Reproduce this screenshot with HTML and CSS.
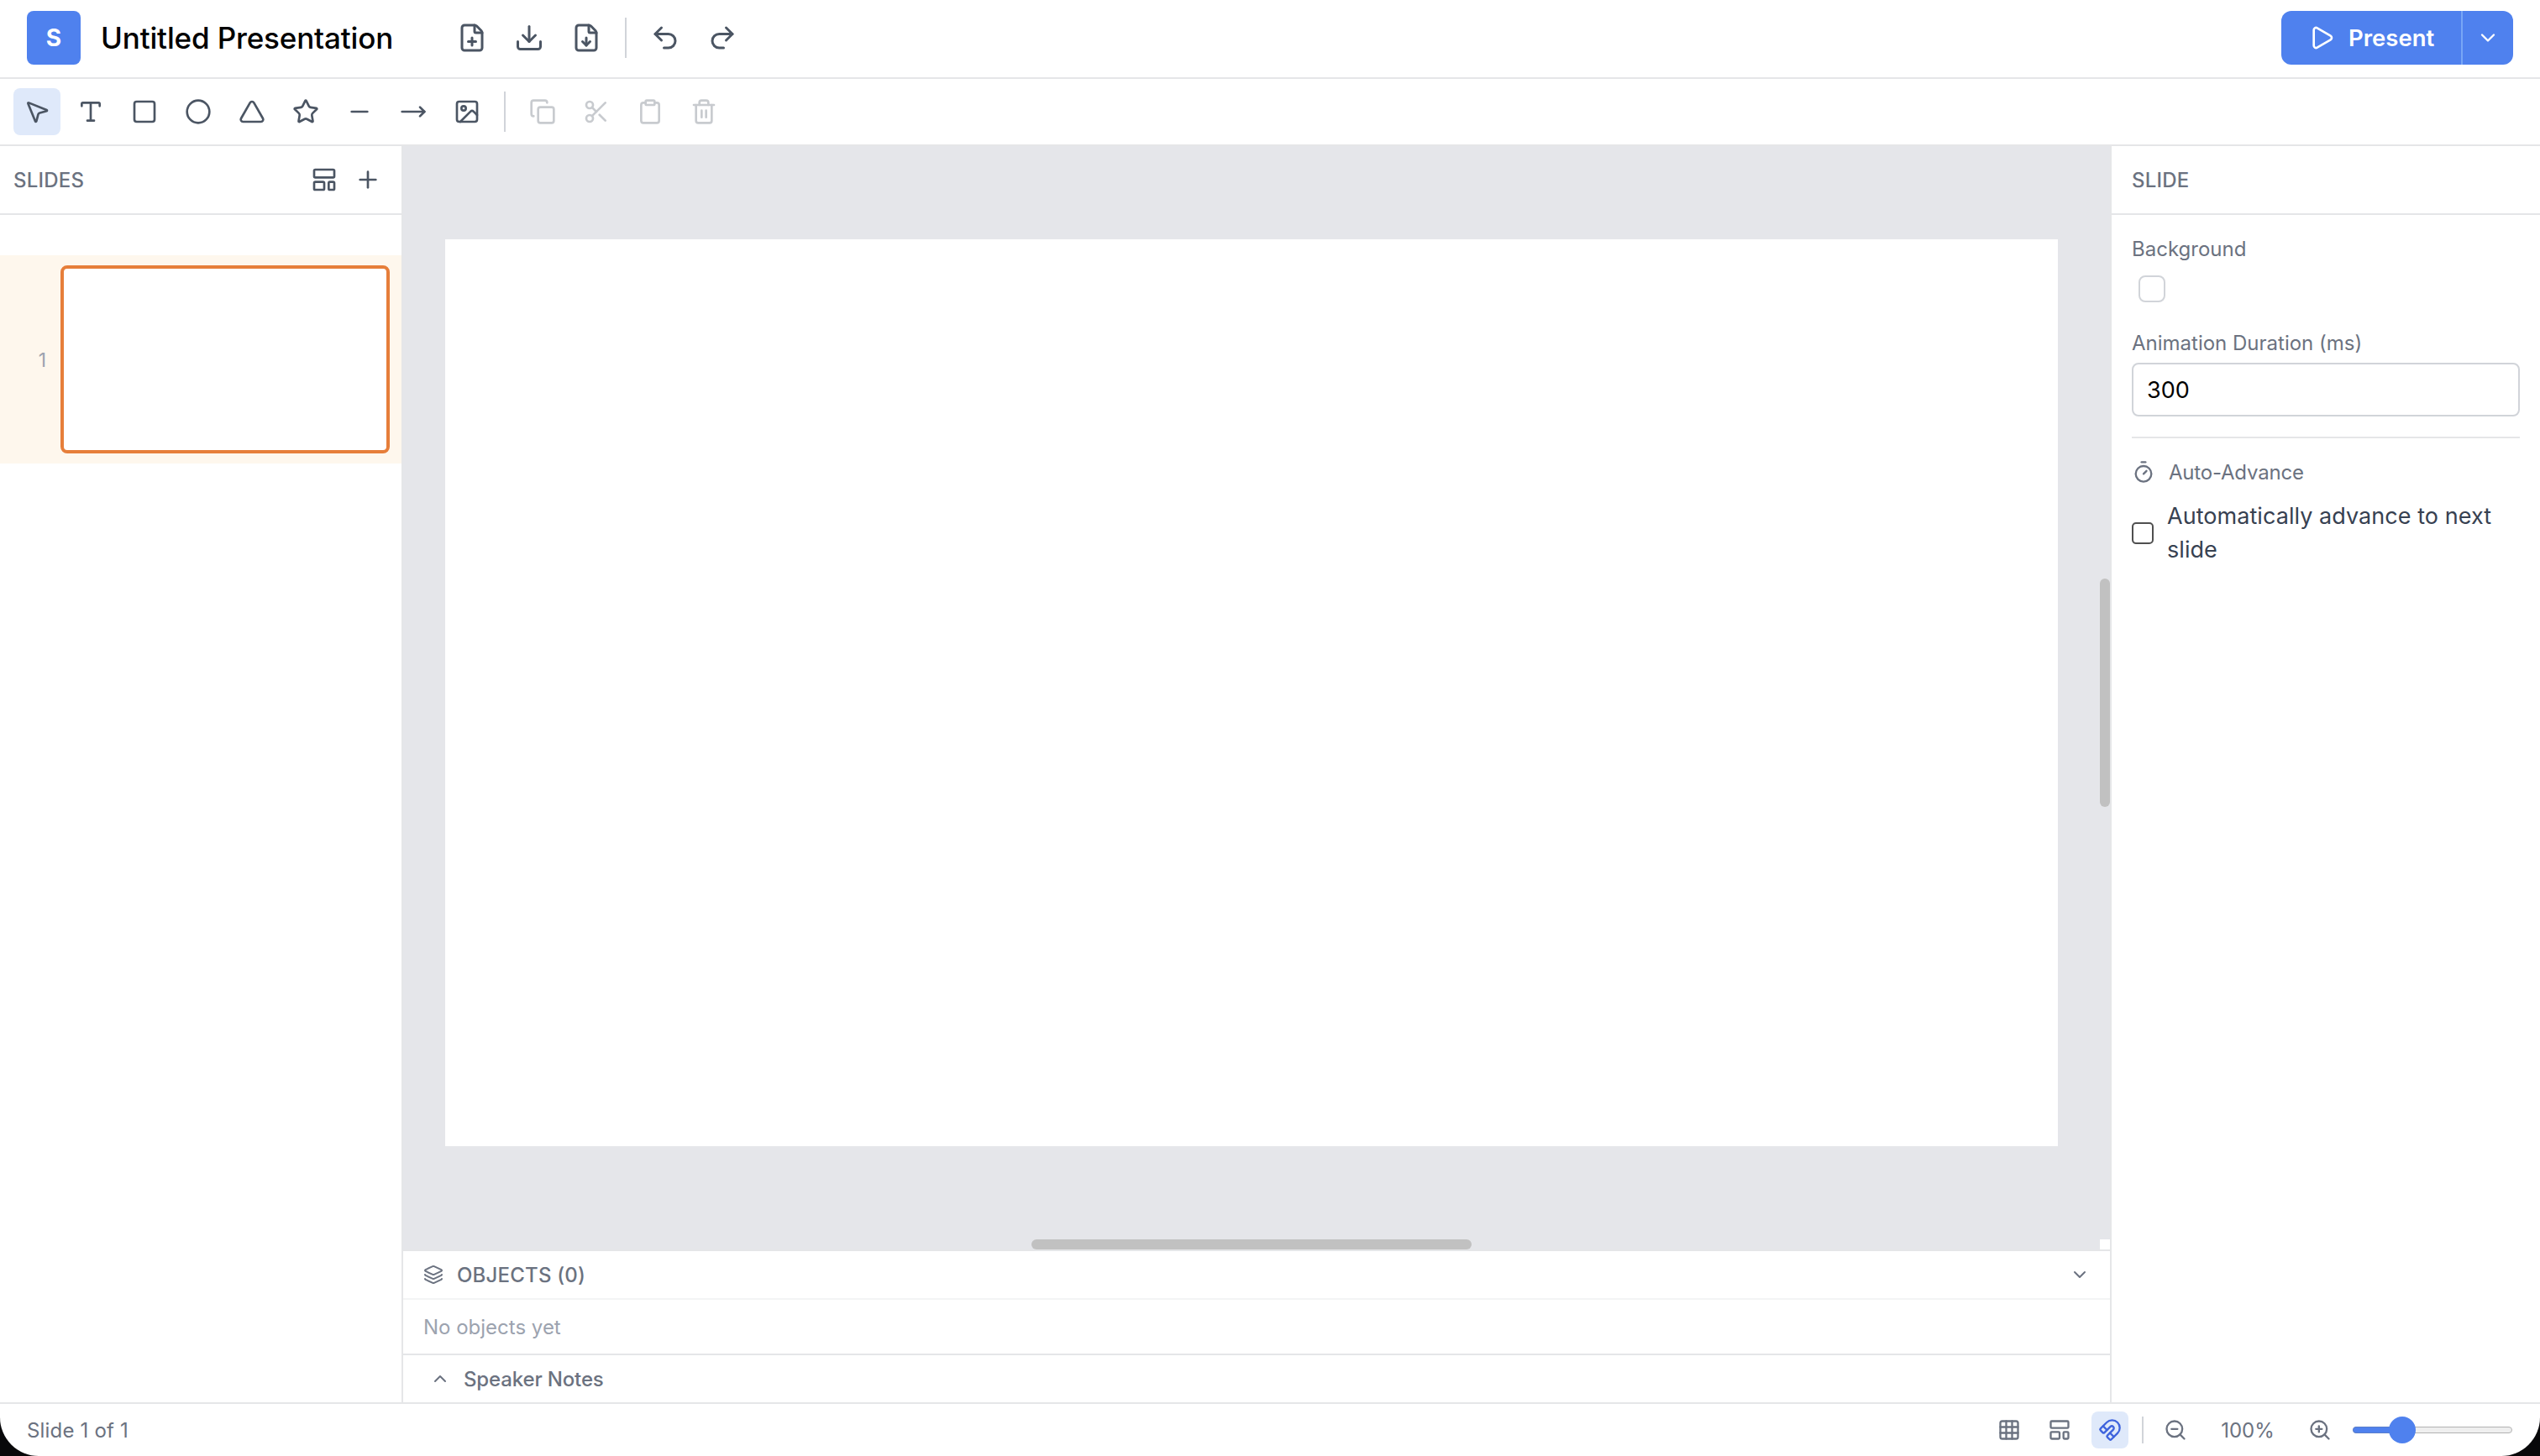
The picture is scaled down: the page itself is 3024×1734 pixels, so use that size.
FILE: index.html
```html
<!DOCTYPE html>
<html lang="en">
<head>
    <meta charset="UTF-8">
    <meta name="viewport" content="width=device-width, initial-scale=1.0">
    <title>Untitled Presentation</title>
    <link rel="stylesheet" href="styles.css">
</head>
<body>
    <div class="app">
        <header class="header">
            <div class="logo">S</div>
            <h1 class="title">Untitled Presentation</h1>
            <div class="header-actions">
                <button class="header-btn" aria-label="New">
                    <svg class="icon icon-lg" viewBox="0 0 24 24"><path d="M6 22a2 2 0 0 1-2-2V4a2 2 0 0 1 2-2h8a2.4 2.4 0 0 1 1.704.706l3.588 3.588A2.4 2.4 0 0 1 20 8v12a2 2 0 0 1-2 2z"/><path d="M14 2v5a1 1 0 0 0 1 1h5"/><path d="M9 15h6"/><path d="M12 18v-6"/></svg>
                </button>
                <button class="header-btn" aria-label="Download">
                    <svg class="icon icon-lg" viewBox="0 0 24 24"><path d="M12 15V3"/><path d="M21 15v4a2 2 0 0 1-2 2H5a2 2 0 0 1-2-2v-4"/><path d="m7 10 5 5 5-5"/></svg>
                </button>
                <button class="header-btn" aria-label="Export">
                    <svg class="icon icon-lg" viewBox="0 0 24 24"><path d="M6 22a2 2 0 0 1-2-2V4a2 2 0 0 1 2-2h8a2.4 2.4 0 0 1 1.704.706l3.588 3.588A2.4 2.4 0 0 1 20 8v12a2 2 0 0 1-2 2z"/><path d="M14 2v5a1 1 0 0 0 1 1h5"/><path d="M12 18v-6"/><path d="m9 15 3 3 3-3"/></svg>
                </button>
                <span class="divider"></span>
                <button class="header-btn" aria-label="Undo">
                    <svg class="icon icon-lg" viewBox="0 0 24 24"><path d="M9 14 4 9l5-5"/><path d="M4 9h10.5a5.5 5.5 0 0 1 5.5 5.5a5.5 5.5 0 0 1-5.5 5.5H11"/></svg>
                </button>
                <button class="header-btn" aria-label="Redo">
                    <svg class="icon icon-lg" viewBox="0 0 24 24"><path d="m15 14 5-5-5-5"/><path d="M20 9H9.5A5.5 5.5 0 0 0 4 14.5A5.5 5.5 0 0 0 9.5 20H13"/></svg>
                </button>
            </div>
            <div class="present">
                <button class="present-btn">
                    <svg class="icon" viewBox="0 0 24 24"><path d="M5 5a2 2 0 0 1 3.008-1.728l11.997 6.998a2 2 0 0 1 .003 3.458l-12 7A2 2 0 0 1 5 19z"/></svg>
                    Present
                </button>
                <button class="present-menu" aria-label="Present options">
                    <svg class="icon icon-md" viewBox="0 0 24 24"><path d="m6 9 6 6 6-6"/></svg>
                </button>
            </div>
        </header>

        <div class="toolbar">
            <button class="tool active" aria-label="Select">
                <svg class="icon" viewBox="0 0 24 24"><path d="M4.037 4.688a.495.495 0 0 1 .651-.651l16 6.5a.5.5 0 0 1-.063.947l-6.124 1.58a2 2 0 0 0-1.438 1.435l-1.579 6.126a.5.5 0 0 1-.947.063z"/></svg>
            </button>
            <button class="tool" aria-label="Text">
                <svg class="icon" viewBox="0 0 24 24"><path d="M12 4v16"/><path d="M4 7V5a1 1 0 0 1 1-1h14a1 1 0 0 1 1 1v2"/><path d="M9 20h6"/></svg>
            </button>
            <button class="tool" aria-label="Rectangle">
                <svg class="icon" viewBox="0 0 24 24"><rect width="18" height="18" x="3" y="3" rx="2"/></svg>
            </button>
            <button class="tool" aria-label="Ellipse">
                <svg class="icon" viewBox="0 0 24 24"><circle cx="12" cy="12" r="10"/></svg>
            </button>
            <button class="tool" aria-label="Triangle">
                <svg class="icon" viewBox="0 0 24 24"><path d="M13.73 4a2 2 0 0 0-3.46 0l-8 14A2 2 0 0 0 4 21h16a2 2 0 0 0 1.73-3Z"/></svg>
            </button>
            <button class="tool" aria-label="Star">
                <svg class="icon" viewBox="0 0 24 24"><path d="M11.525 2.295a.53.53 0 0 1 .95 0l2.31 4.679a2.123 2.123 0 0 0 1.595 1.16l5.166.756a.53.53 0 0 1 .294.904l-3.736 3.638a2.123 2.123 0 0 0-.611 1.878l.882 5.14a.53.53 0 0 1-.771.56l-4.618-2.428a2.122 2.122 0 0 0-1.973 0L6.396 21.01a.53.53 0 0 1-.77-.56l.881-5.139a2.122 2.122 0 0 0-.611-1.879L2.16 9.795a.53.53 0 0 1 .294-.906l5.165-.755a2.122 2.122 0 0 0 1.597-1.16z"/></svg>
            </button>
            <button class="tool" aria-label="Line">
                <svg class="icon" viewBox="0 0 24 24"><path d="M5 12h14"/></svg>
            </button>
            <button class="tool" aria-label="Arrow">
                <svg class="icon" viewBox="0 0 24 24"><path d="M18 8L22 12L18 16"/><path d="M2 12H22"/></svg>
            </button>
            <button class="tool" aria-label="Image">
                <svg class="icon" viewBox="0 0 24 24"><rect width="18" height="18" x="3" y="3" rx="2"/><circle cx="9" cy="9" r="2"/><path d="m21 15-3.086-3.086a2 2 0 0 0-2.828 0L6 21"/></svg>
            </button>
            <span class="divider"></span>
            <button class="tool" aria-label="Copy" disabled>
                <svg class="icon" viewBox="0 0 24 24"><rect width="14" height="14" x="8" y="8" rx="2"/><path d="M4 16c-1.1 0-2-.9-2-2V4c0-1.1.9-2 2-2h10c1.1 0 2 .9 2 2"/></svg>
            </button>
            <button class="tool" aria-label="Cut" disabled>
                <svg class="icon" viewBox="0 0 24 24"><circle cx="6" cy="6" r="3"/><path d="M8.12 8.12 12 12"/><path d="M20 4 8.12 15.88"/><circle cx="6" cy="18" r="3"/><path d="M14.8 14.8 20 20"/></svg>
            </button>
            <button class="tool" aria-label="Paste" disabled>
                <svg class="icon" viewBox="0 0 24 24"><rect width="8" height="4" x="8" y="2" rx="1"/><path d="M16 4h2a2 2 0 0 1 2 2v14a2 2 0 0 1-2 2H6a2 2 0 0 1-2-2V6a2 2 0 0 1 2-2h2"/></svg>
            </button>
            <button class="tool" aria-label="Delete" disabled>
                <svg class="icon" viewBox="0 0 24 24"><path d="M10 11v6"/><path d="M14 11v6"/><path d="M19 6v14a2 2 0 0 1-2 2H7a2 2 0 0 1-2-2V6"/><path d="M3 6h18"/><path d="M8 6V4a2 2 0 0 1 2-2h4a2 2 0 0 1 2 2v2"/></svg>
            </button>
        </div>

        <div class="workspace">
            <aside class="slides-panel">
                <div class="panel-header">
                    <h2 class="panel-title">SLIDES</h2>
                    <div class="panel-actions">
                        <button class="panel-btn" aria-label="Layouts">
                            <svg class="icon" viewBox="0 0 24 24"><rect width="18" height="7" x="3" y="3" rx="1"/><rect width="9" height="7" x="3" y="14" rx="1"/><rect width="5" height="7" x="16" y="14" rx="1"/></svg>
                        </button>
                        <button class="panel-btn" aria-label="Add slide">
                            <svg class="icon" viewBox="0 0 24 24"><path d="M5 12h14"/><path d="M12 5v14"/></svg>
                        </button>
                    </div>
                </div>
                <div class="slide-item">
                    <span class="slide-number">1</span>
                    <div class="slide-thumb"></div>
                </div>
            </aside>

            <main class="editor">
                <div class="viewport">
                    <div class="stage"><div class="canvas"></div></div>
                    <div class="scroll-y"><div class="thumb"></div></div>
                    <div class="scroll-x"><div class="thumb"></div></div>
                    <div class="scroll-corner"></div>
                </div>
                <section class="objects">
                    <div class="objects-header">
                        <svg class="icon icon-sm" viewBox="0 0 24 24"><path d="M12.83 2.18a2 2 0 0 0-1.66 0L2.6 6.08a1 1 0 0 0 0 1.83l8.58 3.91a2 2 0 0 0 1.66 0l8.58-3.9a1 1 0 0 0 0-1.83z"/><path d="M2 12a1 1 0 0 0 .58.91l8.6 3.91a2 2 0 0 0 1.65 0l8.58-3.9A1 1 0 0 0 22 12"/><path d="M2 17a1 1 0 0 0 .58.91l8.6 3.91a2 2 0 0 0 1.65 0l8.58-3.9A1 1 0 0 0 22 17"/></svg>
                        <h2 class="panel-title">OBJECTS (0)</h2>
                        <svg class="icon icon-sm objects-toggle" viewBox="0 0 24 24"><path d="m6 9 6 6 6-6"/></svg>
                    </div>
                    <p class="objects-empty">No objects yet</p>
                </section>
                <div class="notes">
                    <svg class="icon icon-sm" viewBox="0 0 24 24"><path d="m18 15-6-6-6 6"/></svg>
                    <span class="notes-label">Speaker Notes</span>
                </div>
            </main>

            <aside class="props-panel">
                <div class="panel-header">
                    <h2 class="panel-title">SLIDE</h2>
                </div>
                <div class="props">
                    <label class="prop-label">Background</label>
                    <div class="swatch"></div>
                    <label class="prop-label" for="duration">Animation Duration (ms)</label>
                    <input class="prop-input" id="duration" type="text" value="300">
                    <div class="auto-advance">
                        <div class="auto-title">
                            <svg class="icon icon-md" viewBox="0 0 24 24"><path d="M10 2h4"/><path d="m12 14 3-3"/><circle cx="12" cy="14" r="8"/></svg>
                            <span>Auto-Advance</span>
                        </div>
                        <label class="check-row">
                            <input class="check" type="checkbox">
                            <span class="check-label">Automatically advance to next slide</span>
                        </label>
                    </div>
                </div>
            </aside>
        </div>

        <footer class="status">
            <span class="status-text">Slide 1 of 1</span>
            <div class="status-tools">
                <button class="status-btn" aria-label="Grid">
                    <svg class="icon icon-md" viewBox="0 0 24 24"><rect width="18" height="18" x="3" y="3" rx="2"/><path d="M3 9h18"/><path d="M3 15h18"/><path d="M9 3v18"/><path d="M15 3v18"/></svg>
                </button>
                <button class="status-btn" aria-label="Guides">
                    <svg class="icon icon-md" viewBox="0 0 24 24"><rect width="18" height="7" x="3" y="3" rx="1"/><rect width="9" height="7" x="3" y="14" rx="1"/><rect width="5" height="7" x="16" y="14" rx="1"/></svg>
                </button>
                <button class="status-btn active" aria-label="Snap">
                    <svg class="icon icon-md" viewBox="0 0 24 24"><path d="m12 15 4 4"/><path d="M2.352 10.648a1.205 1.205 0 0 0 0 1.704l2.296 2.296a1.205 1.205 0 0 0 1.704 0l6.029-6.029a1 1 0 1 1 3 3l-6.029 6.029a1.205 1.205 0 0 0 0 1.704l2.296 2.296a1.205 1.205 0 0 0 1.704 0l6.365-6.367A1 1 0 0 0 8.716 4.282z"/><path d="m5 8 4 4"/></svg>
                </button>
                <span class="divider divider-sm"></span>
                <button class="status-btn" aria-label="Zoom out">
                    <svg class="icon icon-md" viewBox="0 0 24 24"><circle cx="11" cy="11" r="8"/><path d="m21 21-4.35-4.35"/><path d="M8 11h6"/></svg>
                </button>
                <span class="zoom-value">100%</span>
                <button class="status-btn" aria-label="Zoom in">
                    <svg class="icon icon-md" viewBox="0 0 24 24"><circle cx="11" cy="11" r="8"/><path d="m21 21-4.35-4.35"/><path d="M11 8v6"/><path d="M8 11h6"/></svg>
                </button>
                <div class="slider">
                    <div class="slider-track"><div class="slider-fill"></div></div>
                    <div class="slider-thumb"></div>
                </div>
            </div>
        </footer>
    </div>
</body>
</html>
```
FILE: styles.css
```css
* {
    margin: 0;
    padding: 0;
    box-sizing: border-box;
}

body {
    font-family: Inter, "Liberation Sans", sans-serif;
    font-size: 24px;
    color: #6b7280;
    background: #08080a;
    height: 100vh;
    overflow: hidden;
}

button {
    border: none;
    background: none;
    font: inherit;
    color: #4b5563;
    display: flex;
    align-items: center;
    justify-content: center;
    cursor: pointer;
}

.app {
    height: 100vh;
    display: flex;
    flex-direction: column;
    background: #fff;
    border-radius: 0 0 46px 46px;
    overflow: hidden;
}

.icon {
    width: 32px;
    height: 32px;
    flex-shrink: 0;
    fill: none;
    stroke: currentColor;
    stroke-width: 2;
    stroke-linecap: round;
    stroke-linejoin: round;
}

.icon-lg {
    width: 36px;
    height: 36px;
}

.icon-md {
    width: 28px;
    height: 28px;
}

.icon-sm {
    width: 24px;
    height: 24px;
}

.divider {
    width: 2px;
    height: 48px;
    margin: 0 8px;
    background: #d1d4d9;
}

.divider-sm {
    height: 32px;
    margin: 0;
}

/* Header */
.header {
    height: 94px;
    padding: 0 32px 2px;
    display: flex;
    align-items: center;
    border-bottom: 2px solid #e5e6e8;
}

.logo {
    width: 64px;
    height: 64px;
    border-radius: 8px;
    background: #4f81ee;
    color: #fff;
    font-size: 28px;
    font-weight: 700;
    display: flex;
    align-items: center;
    justify-content: center;
}

.title {
    width: 404px;
    margin-left: 24px;
    font-size: 35px;
    font-weight: 500;
    letter-spacing: -0.15px;
    color: #000;
    white-space: nowrap;
}

.header-actions {
    display: flex;
    align-items: center;
    gap: 8px;
    margin-left: 8px;
}

.header-btn {
    width: 60px;
    height: 60px;
}

.present {
    height: 64px;
    margin-left: auto;
    display: flex;
    border-radius: 12px;
    background: #4f81ee;
    overflow: hidden;
}

.present-btn {
    width: 214px;
    padding-left: 32px;
    gap: 16px;
    justify-content: flex-start;
    font-size: 27.5px;
    font-weight: 600;
    color: #fff;
}

.present-menu {
    width: 62px;
    border-left: 2px solid #78a6f6;
    color: #fff;
}

/* Toolbar */
.toolbar {
    height: 80px;
    padding: 0 16px;
    display: flex;
    align-items: center;
    gap: 8px;
    border-bottom: 2px solid #e5e6e8;
}

.tool {
    width: 56px;
    height: 56px;
    border-radius: 8px;
}

.tool.active {
    background: #dfe9fa;
}

.tool:disabled {
    opacity: 0.3;
}

/* Workspace */
.workspace {
    flex: 1;
    min-height: 0;
    display: flex;
}

.slides-panel {
    width: 480px;
    border-right: 2px solid #e5e6e8;
}

.panel-header {
    height: 82px;
    padding: 0 16px;
    display: flex;
    align-items: center;
    justify-content: space-between;
    border-bottom: 2px solid #e5e6e8;
}

.panel-title {
    font-size: 24px;
    font-weight: 500;
    letter-spacing: 0.2px;
    color: #6b7280;
}

.panel-actions {
    display: flex;
    gap: 4px;
}

.panel-btn {
    width: 48px;
    height: 48px;
}

.slide-item {
    margin-top: 48px;
    padding: 12px 14px 12px 16px;
    display: flex;
    align-items: center;
    background: #fef7ed;
}

.slide-number {
    width: 39px;
    margin-right: 17px;
    padding-top: 1px;
    text-align: right;
    font-size: 23px;
    color: #9ca3af;
}

.slide-thumb {
    flex: 1;
    height: 224px;
    border: 4px solid #e67e3a;
    border-radius: 8px;
    background: #fff;
}

.editor {
    flex: 1;
    min-width: 0;
    display: flex;
    flex-direction: column;
}

.viewport {
    flex: 1;
    display: grid;
    grid-template-columns: 1fr 12px;
    grid-template-rows: 1fr 12px;
    background: #e5e6ea;
}

.stage {
    display: flex;
    align-items: center;
    justify-content: center;
}

.canvas {
    width: 1920px;
    height: 1080px;
    background: #fff;
}

.scroll-y .thumb {
    width: 12px;
    height: 272px;
    margin-top: 515px;
    border-radius: 6px;
    background: #c1c1c1;
}

.scroll-x .thumb {
    width: 524px;
    height: 12px;
    margin-left: 748px;
    border-radius: 6px;
    background: #c1c1c1;
}

.scroll-corner {
    background: #fff;
}

.objects {
    border-top: 2px solid #e5e6e8;
}

.objects-header {
    height: 58px;
    padding: 0 24px;
    display: flex;
    align-items: center;
    gap: 16px;
    border-bottom: 2px solid #f3f4f5;
}

.objects-toggle {
    margin-left: auto;
}

.objects-empty {
    height: 64px;
    padding: 1px 24px 0;
    line-height: 64px;
    color: #9ca3af;
}

.notes {
    height: 58px;
    padding: 0 32px;
    display: flex;
    align-items: center;
    gap: 16px;
    border-top: 2px solid #e5e6e8;
}

.notes-label {
    font-weight: 500;
    letter-spacing: -0.15px;
}

/* Properties */
.props-panel {
    width: 512px;
    border-left: 2px solid #e5e6e8;
}

.props-panel .panel-header {
    padding: 0 24px;
}

.props {
    padding: 24px;
    display: flex;
    flex-direction: column;
}

.prop-label {
    height: 32px;
    line-height: 34px;
}

.swatch {
    width: 32px;
    height: 32px;
    margin: 16px 8px 32px;
    border: 2px solid #d1d4d9;
    border-radius: 8px;
}

.prop-input {
    height: 64px;
    margin-top: 8px;
    padding: 1px 16px 0;
    border: 2px solid #d1d4d9;
    border-radius: 8px;
    font: inherit;
    font-size: 27px;
    color: #000;
}

.auto-advance {
    margin-top: 24px;
    padding-top: 24px;
    border-top: 2px solid #e5e6e8;
}

.auto-title {
    height: 32px;
    display: flex;
    align-items: center;
    gap: 16px;
    letter-spacing: -0.2px;
}

.check-row {
    margin-top: 16px;
    display: flex;
    align-items: center;
    gap: 16px;
    font-size: 27px;
    line-height: 40px;
    letter-spacing: 0.05px;
    color: #374151;
}

.check-label {
    padding-top: 1px;
}

.check {
    appearance: none;
    width: 26px;
    height: 26px;
    flex-shrink: 0;
    border: 2px solid #4f4f4f;
    border-radius: 5px;
    background: #fff;
}

/* Status bar */
.status {
    height: 64px;
    padding: 0 32px;
    display: flex;
    align-items: center;
    justify-content: space-between;
    border-top: 2px solid #e5e6e8;
}

.status-text {
    letter-spacing: 0.18px;
}

.status-tools {
    display: flex;
    align-items: center;
    gap: 16px;
}

.status-btn {
    width: 44px;
    height: 44px;
    border-radius: 8px;
    color: #6b7280;
}

.status-btn.active {
    background: #dfe9fa;
    color: #3e63dd;
}

.zoom-value {
    width: 96px;
    text-align: center;
}

.slider {
    position: relative;
    width: 192px;
    height: 32px;
    display: flex;
    align-items: center;
}

.slider-track {
    width: 190px;
    height: 8px;
    margin-left: 1px;
    border: 1.5px solid #b2b2b2;
    border-radius: 4px;
    background: #efefef;
}

.slider-fill {
    width: 56px;
    height: 8px;
    margin: -1px;
    border: 1px solid #5a7ecb;
    border-radius: 4px 0 0 4px;
    background: #4f81ee;
}

.slider-thumb {
    position: absolute;
    left: 44px;
    width: 32px;
    height: 32px;
    border-radius: 50%;
    background: #4f81ee;
}
```
